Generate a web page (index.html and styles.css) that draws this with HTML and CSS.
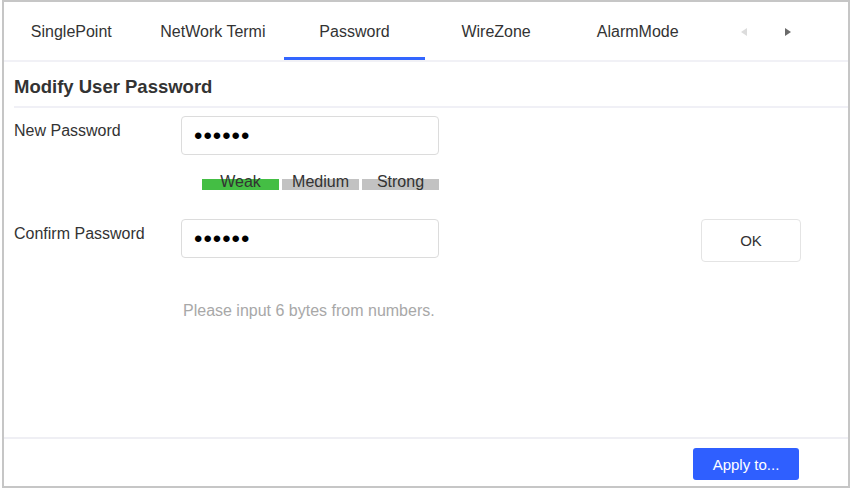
FILE: index.html
```html
<!DOCTYPE html>
<html>
<head>
<meta charset="utf-8">
<link rel="stylesheet" href="styles.css">
</head>
<body>
<div class="frame">
  <div class="tabbar">
    <div class="tabs">
      <div class="tab">SinglePoint</div>
      <div class="tab">NetWork Termi</div>
      <div class="tab active">Password</div>
      <div class="tab">WireZone</div>
      <div class="tab">AlarmMode</div>
    </div>
    <div class="arrows">
      <span class="arrow">
        <svg width="6" height="8" viewBox="0 0 6 8"><path d="M6 0 L0 4 L6 8 Z" fill="#dcdcdc"/></svg>
      </span>
      <span class="arrow">
        <svg width="6" height="8" viewBox="0 0 6 8"><path d="M0 0 L6 4 L0 8 Z" fill="#6a6a6a"/></svg>
      </span>
    </div>
  </div>

  <div class="section-title">Modify User Password</div>

  <div class="form">
    <div class="row row-first">
      <label class="label">New Password</label>
      <input class="pwd" type="password" value="123456">
    </div>
    <div class="strength">
      <div class="level weak">Weak</div>
      <div class="level">Medium</div>
      <div class="level">Strong</div>
    </div>
    <div class="row row-confirm">
      <label class="label">Confirm Password</label>
      <input class="pwd" type="password" value="123456">
      <button class="ok">OK</button>
    </div>
    <div class="hint">Please input 6 bytes from numbers.</div>
  </div>

  <div class="footer">
    <button class="apply">Apply to...</button>
  </div>
</div>
</body>
</html>
```

FILE: styles.css
```css
* { box-sizing: border-box; }

html, body {
  margin: 0;
  padding: 0;
  background: #ffffff;
}

body {
  font-family: "Liberation Sans", Arial, sans-serif;
  color: #333333;
  font-size: 16px;
}

.frame {
  margin-left: 2px;
  width: 848px;
  height: 488px;
  border: 2px solid #c6c6c6;
  display: flex;
  flex-direction: column;
  background: #fff;
}

.tabbar {
  height: 60px;
  border-bottom: 2px solid #f1f1f6;
  display: flex;
  align-items: stretch;
}

.tabs {
  display: flex;
  margin-left: -3.5px;
}

.tab {
  width: 141.6px;
  padding-top: 2px;
  display: flex;
  align-items: center;
  justify-content: center;
  font-size: 16px;
  color: #333;
  white-space: nowrap;
}

.tab.active {
  box-shadow: inset 0 -3px 0 #3366ff;
}

.arrows {
  display: flex;
  align-items: center;
  padding-top: 2px;
  margin-left: 28px;
  gap: 28px;
}

.arrow {
  width: 16px;
  height: 16px;
  display: flex;
  align-items: center;
  justify-content: center;
}

.section-title {
  margin-left: 10px;
  padding-top: 6px;
  height: 46px;
  line-height: 38px;
  font-size: 18.5px;
  font-weight: bold;
  color: #333;
  border-bottom: 2px solid #f0f0f6;
}

.form {
  flex: 1;
  padding-left: 10px;
  padding-top: 8px;
}

.row {
  display: flex;
  align-items: flex-start;
}

.label {
  width: 167px;
  padding-top: 5px;
  line-height: 20px;
  font-size: 16px;
  color: #333;
}

.pwd {
  width: 258px;
  height: 39px;
  margin: 0;
  border: 1px solid #dcdcdc;
  border-radius: 4px;
  padding: 0 0 0 12px;
  font-family: "Liberation Sans", Arial, sans-serif;
  font-size: 24px;
  letter-spacing: 1px;
  color: #000;
  outline: none;
  background: #fff;
}

.strength {
  margin-top: 16px;
  margin-left: 188px;
  display: flex;
  gap: 3px;
}

.level {
  width: 77px;
  height: 19px;
  line-height: 19px;
  padding-top: 1px;
  text-align: center;
  font-size: 16px;
  color: #333;
  background: linear-gradient(to bottom, transparent 8px, #c2c2c2 8px);
}

.level.weak {
  background: linear-gradient(to bottom, transparent 8px, #44be44 8px);
}

.row-confirm {
  margin-top: 29px;
}

.ok {
  margin-left: 262px;
  width: 100px;
  height: 43px;
  border: 1px solid #e4e4e4;
  border-radius: 4px;
  background: #fff;
  font-family: "Liberation Sans", Arial, sans-serif;
  font-size: 15px;
  color: #333;
  padding: 0;
}

.hint {
  margin-top: 39px;
  margin-left: 169px;
  line-height: 20px;
  font-size: 16px;
  color: #a8a8a8;
}

.footer {
  border-top: 2px solid #efeff4;
  display: flex;
  justify-content: flex-end;
  padding: 9px 49px 6px 0;
}

.apply {
  width: 106px;
  height: 32px;
  border: none;
  border-radius: 3px;
  background: #2f5fff;
  color: #fff;
  font-family: "Liberation Sans", Arial, sans-serif;
  font-size: 15px;
  padding: 0;
}
```
